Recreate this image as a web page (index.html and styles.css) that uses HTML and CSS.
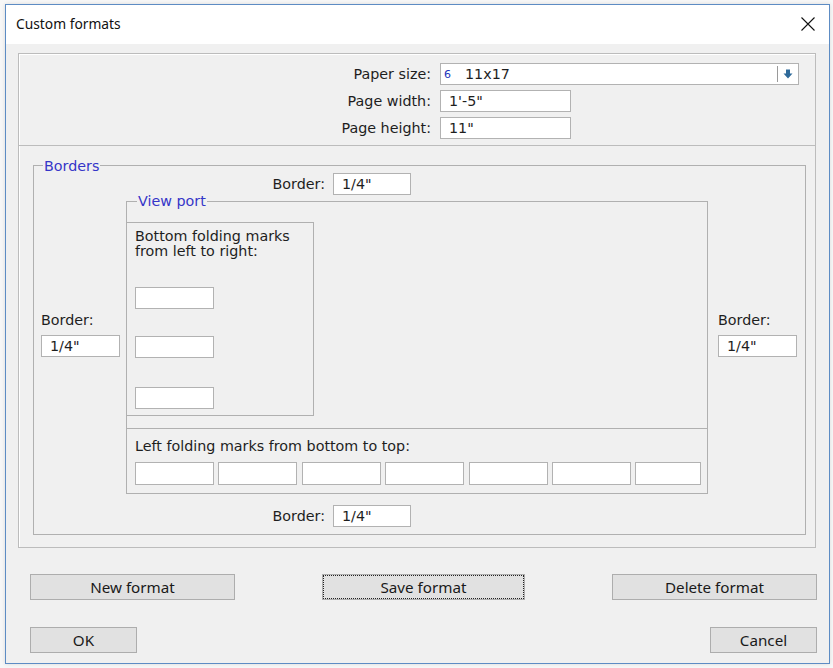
FILE: index.html
```html
<!DOCTYPE html>
<html>
<head>
<meta charset="utf-8">
<link rel="stylesheet" href="styles.css">
</head>
<body>
<div class="window">
  <div class="titlebar">
    <span class="title">Custom formats</span>
    <svg class="close" width="16" height="16" viewBox="0 0 16 16"><path d="M1.5 1.5 L14.5 14.5 M14.5 1.5 L1.5 14.5" stroke="#111" stroke-width="1.1" fill="none"/></svg>
  </div>
  <div class="client">
    <div class="mainbox">
      <div class="paper">
        <label class="lbl">Paper size:</label>
        <div class="field combo">
          <span class="num">6</span><span class="val">11x17</span>
          <span class="sep"></span>
          <svg class="arrow" width="10" height="10" viewBox="0 0 10 10"><path d="M3 0.5 H7 V4.5 H9.5 L5 9.5 L0.5 4.5 H3 Z" fill="#2e6a9a"/></svg>
        </div>
        <label class="lbl">Page width:</label>
        <div class="field w131"><span class="val">1'-5"</span></div>
        <label class="lbl">Page height:</label>
        <div class="field w131"><span class="val">11"</span></div>
      </div>
      <div class="lower">
        <div class="group borders">
          <span class="legend">Borders</span>
          <div class="bgrid">
            <div class="toprow">
              <label class="lbl">Border:</label>
              <div class="field w78"><span class="val">1/4"</span></div>
            </div>
            <div class="side left">
              <label class="lbl">Border:</label>
              <div class="field w79"><span class="val">1/4"</span></div>
            </div>
            <div class="group viewport">
              <span class="legend">View port</span>
              <div class="bottommarks">
                <div class="txt">Bottom folding marks<br>from left to right:</div>
                <div class="field w79 m1"></div>
                <div class="field w79 m2"></div>
                <div class="field w79 m3"></div>
              </div>
              <div class="leftmarks">
                <div class="txt">Left folding marks from bottom to top:</div>
                <div class="markrow">
                  <div class="field"></div>
                  <div class="field"></div>
                  <div class="field"></div>
                  <div class="field"></div>
                  <div class="field"></div>
                  <div class="field"></div>
                  <div class="field"></div>
                </div>
              </div>
            </div>
            <div class="side right">
              <label class="lbl">Border:</label>
              <div class="field w79"><span class="val">1/4"</span></div>
            </div>
            <div class="botrow">
              <label class="lbl">Border:</label>
              <div class="field w78"><span class="val">1/4"</span></div>
            </div>
          </div>
        </div>
      </div>
    </div>
    <div class="btnrow">
      <button class="btn wide">New format</button>
      <button class="btn wide focus">Save format</button>
      <button class="btn wide">Delete format</button>
    </div>
    <div class="btnrow last">
      <button class="btn small">OK</button>
      <button class="btn small">Cancel</button>
    </div>
  </div>
</div>
</body>
</html>
```
FILE: styles.css
```css
* { box-sizing: border-box; }
html, body { margin: 0; padding: 0; }
body {
  background: #f7f7f7;
  width: 833px;
  height: 668px;
  overflow: hidden;
  font-family: "DejaVu Sans", Verdana, sans-serif;
  font-size: 14.3px;
  color: #1e1e1e;
}
.window {
  margin: 4px 0 0 5px;
  width: 825px;
  height: 660px;
  border: 1px solid #5d8cc4;
  background: #f0f0f0;
  box-shadow: 0 0 4px rgba(0,0,0,0.12);
}
.titlebar {
  height: 39px;
  background: #fff;
  display: flex;
  align-items: center;
  justify-content: space-between;
  padding: 0 13px 0 10px;
}
.title {
  font-family: "Noto Sans", "Open Sans", sans-serif;
  font-size: 13.8px;
  color: #111;
  margin-top: -2px;
}
.close { display: block; margin-top: -2px; }
.client { padding: 9px 0 0 12px; }
.mainbox {
  width: 798px;
  border: 1px solid #bcbcbc;
  box-shadow: inset 1px 1px 0 #fff;
}
.paper {
  display: grid;
  grid-template-columns: 412px auto;
  column-gap: 9px;
  row-gap: 5px;
  padding: 9px 0 6px;
  border-bottom: 1px solid #bcbcbc;
  align-items: center;
  justify-items: start;
}
.paper .lbl { justify-self: end; }
.lbl { white-space: nowrap; line-height: 15px; }
.field {
  height: 22px;
  background: #fff;
  border: 1px solid #b2b2b2;
  display: flex;
  align-items: center;
  padding-left: 8px;
  line-height: 15px;
}
.combo { width: 359px; position: relative; padding-left: 3px; }
.num { color: #2233bb; font-size: 11px; width: 21px; }
.combo .sep {
  position: absolute; right: 20px; top: 2px; bottom: 2px;
  width: 1px; background: #9a9a9a;
}
.combo .arrow { position: absolute; right: 5px; top: 5px; }
.w131 { width: 131px; }
.w78 { width: 78px; }
.w79 { width: 79px; }
.lower { padding: 19px 9px 12px 14px; }
.group { border: 1px solid #b0b0b0; position: relative; }
.legend {
  position: absolute;
  top: -7px;
  left: 9px;
  background: #f0f0f0;
  color: #3535c8;
  padding: 0 1px;
  line-height: 15px;
}
.borders { height: 370px; padding: 7px 8px 0 7px; }
.bgrid {
  display: grid;
  grid-template-columns: 79px 588px 89px;
  grid-template-rows: 22px auto 22px;
  column-gap: 0;
}
.toprow, .botrow {
  grid-column: 2;
  display: grid;
  grid-template-columns: 199px 78px;
  column-gap: 8px;
  align-items: center;
  justify-items: end;
  margin-left: 6px;
}
.toprow { grid-row: 1; }
.botrow { grid-row: 3; }
.side { grid-row: 2; display: flex; flex-direction: column; gap: 7px; padding-top: 118px; }
.side.left { grid-column: 1; }
.side.right { grid-column: 3; margin-left: 10px; }
.viewport {
  grid-column: 2;
  grid-row: 2;
  margin: 6px 0 11px 6px;
  width: 582px;
  height: 293px;
  padding-top: 20px;
  display: flex;
  flex-direction: column;
}
.viewport .legend { left: 10px; top: -8px; }
.bottommarks {
  width: 187px;
  height: 194px;
  border: 1px solid #b0b0b0;
  border-left: none;
  padding: 6px 0 0 8px;
}
.txt { line-height: 15px; }
.bottommarks .field { height: 22px; }
.m1 { margin-top: 28px; }
.m2 { margin-top: 27px; }
.m3 { margin-top: 29px; }
.leftmarks {
  margin-top: 12px;
  flex: 1;
  border-top: 1px solid #b0b0b0;
  padding: 10px 0 0 8px;
}
.markrow {
  display: grid;
  grid-template-columns: repeat(6, 79px) 66px;
  column-gap: 4.4px;
  margin-top: 8px;
}
.markrow .field { height: 23px; }
.btnrow {
  display: flex;
  justify-content: space-between;
  padding: 0 12px 0 12px;
  margin-top: 26px;
}
.btnrow.last { margin-top: 27px; }
.btn {
  font-family: "Noto Sans", "Open Sans", sans-serif;
  font-size: 15.2px;
  color: #1a1a1a;
  background: #e1e1e1;
  border: 1px solid #adadad;
  height: 26px;
  padding: 0;
  margin: 0;
}
.wide { width: 205px; }
.small { width: 107px; height: 26px; }
.focus { outline: 1px dotted #222; outline-offset: -2px; width: 203px; }
```
